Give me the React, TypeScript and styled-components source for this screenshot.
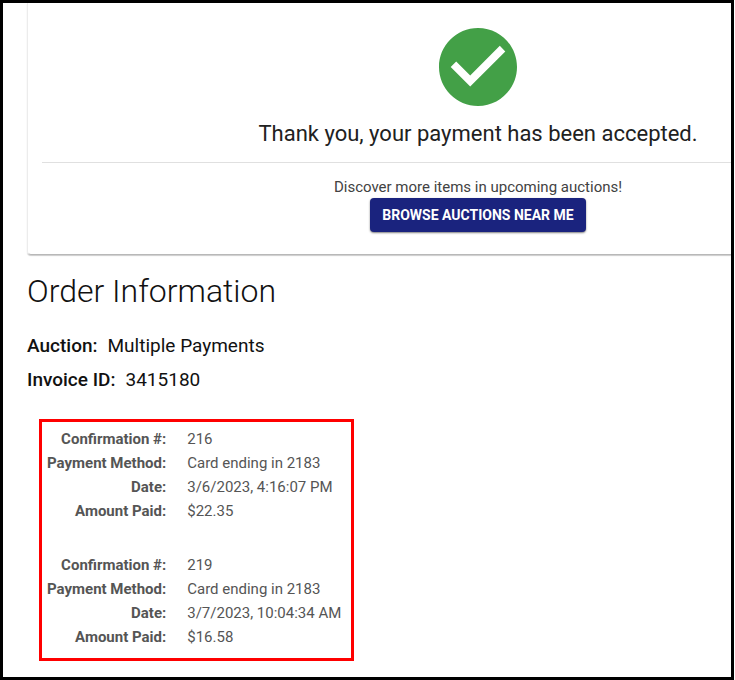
import React from "react";
import styled, { createGlobalStyle } from "styled-components";

const GlobalStyle = createGlobalStyle`
  *, *::before, *::after { box-sizing: border-box; }
  body { margin: 0; background: #fff; font-family: Roboto, sans-serif; color: #111; }
`;

const Frame = styled.main`
  min-height: 100vh;
  margin-right: 1px;
  border: 3px solid #000;
  padding: 0 0 16px 24px;
  overflow: hidden;
`;

const Card = styled.section`
  padding: 25px 0 22px 14px;
  border-left: 1px solid #ececec;
  border-bottom: 1px solid #b8b8b8;
  border-radius: 0 0 0 4px;
  box-shadow: 0 1px 1px rgba(0, 0, 0, 0.2);
`;

const Centered = styled.div`
  display: flex;
  flex-direction: column;
  align-items: center;
  padding-left: 183px;
`;

const CheckMark = styled.svg`
  display: block;
  width: 78px;
  height: 78px;
`;

const Headline = styled.h1`
  margin: 12px 0 0;
  font-size: 22px;
  line-height: 32px;
  font-weight: 400;
  color: #212121;
  white-space: nowrap;
`;

const Rule = styled.hr`
  margin: 12px 0 16px;
  border: 0;
  border-top: 1px solid #e0e0e0;
`;

const Hint = styled.p`
  margin: 0;
  font-size: 15px;
  line-height: 16px;
  color: #424242;
`;

const BrowseButton = styled.button`
  margin-top: 3px;
  height: 34px;
  padding: 0 12px;
  border: 0;
  border-radius: 4px;
  background: #1a237e;
  color: #fff;
  font: 700 14px/32px Roboto, sans-serif;
  text-transform: uppercase;
  white-space: nowrap;
  box-shadow: 0 1px 2px rgba(0, 0, 0, 0.5);
  cursor: pointer;
`;

const SectionTitle = styled.h2`
  margin: 16px 0 18px;
  font-size: 32px;
  line-height: 40px;
  font-weight: 300;
`;

const Fact = styled.p`
  display: flex;
  gap: 10px;
  margin: 0;
  font-size: 19px;
  line-height: 34px;
`;

const FactLabel = styled.strong`
  font-weight: 500;
`;

const Payments = styled.section`
  display: flex;
  flex-direction: column;
  gap: 30px;
  width: fit-content;
  margin: 22px 0 0 12px;
  padding: 5px 10px 9px 5px;
  border: 3px solid #f00;
`;

const Payment = styled.dl`
  display: grid;
  grid-template-columns: max-content auto;
  column-gap: 21px;
  margin: 0;
  font-size: 15px;
  line-height: 24px;
  color: #555;
`;

const Term = styled.dt`
  font-weight: 700;
  text-align: right;
`;

const Value = styled.dd`
  margin: 0;
`;

const payments = [
  { id: "216", method: "Card ending in 2183", date: "3/6/2023, 4:16:07 PM", amount: "$22.35" },
  { id: "219", method: "Card ending in 2183", date: "3/7/2023, 10:04:34 AM", amount: "$16.58" },
];

export default function App() {
  return (
    <>
      <GlobalStyle />
      <Frame>
        <Card>
          <Centered>
            <CheckMark viewBox="2 2 20 20" aria-hidden="true">
              <path fill="#43a047" d="M12 2C6.48 2 2 6.48 2 12s4.48 10 10 10 10-4.48 10-10S17.52 2 12 2zm-2 15l-5-5 1.41-1.41L10 14.17l7.59-7.59L19 8l-9 9z" />
            </CheckMark>
            <Headline>Thank you, your payment has been accepted.</Headline>
          </Centered>
          <Rule />
          <Centered>
            <Hint>Discover more items in upcoming auctions!</Hint>
            <BrowseButton type="button">Browse auctions near me</BrowseButton>
          </Centered>
        </Card>
        <SectionTitle>Order Information</SectionTitle>
        <Fact><FactLabel>Auction:</FactLabel><span>Multiple Payments</span></Fact>
        <Fact><FactLabel>Invoice ID:</FactLabel><span>3415180</span></Fact>
        <Payments>
          {payments.map((p) => (
            <Payment key={p.id}>
              <Term>Confirmation #:</Term><Value>{p.id}</Value>
              <Term>Payment Method:</Term><Value>{p.method}</Value>
              <Term>Date:</Term><Value>{p.date}</Value>
              <Term>Amount Paid:</Term><Value>{p.amount}</Value>
            </Payment>
          ))}
        </Payments>
      </Frame>
    </>
  );
}
